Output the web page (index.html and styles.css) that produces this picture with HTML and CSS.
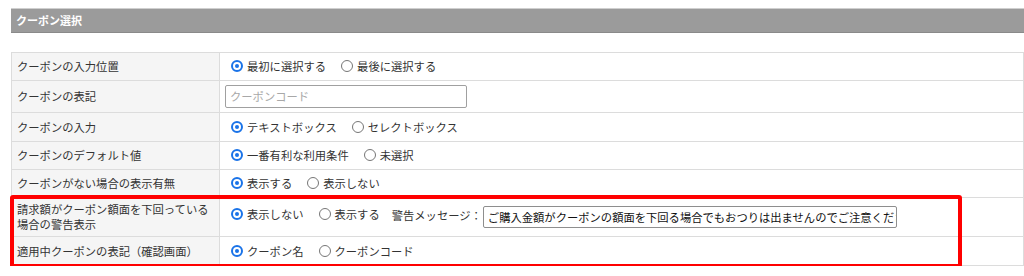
FILE: index.html
```html
<!DOCTYPE html>
<html lang="ja">
<head>
<meta charset="utf-8">
<link rel="stylesheet" href="styles.css">
</head>
<body>
<div class="section-title">クーポン選択</div>
<div class="table-wrap">
<table class="settings">
<colgroup><col class="col-label"><col class="col-value"></colgroup>
<tr class="r1">
<th>クーポンの入力位置</th>
<td><span class="opt"><span class="radio on"></span>最初に選択する</span><span class="opt"><span class="radio"></span>最後に選択する</span></td>
</tr>
<tr class="r2">
<th>クーポンの表記</th>
<td><span class="text-input placeholder">クーポンコード</span></td>
</tr>
<tr class="r3">
<th>クーポンの入力</th>
<td><span class="opt"><span class="radio on"></span>テキストボックス</span><span class="opt"><span class="radio"></span>セレクトボックス</span></td>
</tr>
<tr class="r4">
<th>クーポンのデフォルト値</th>
<td><span class="opt"><span class="radio on"></span>一番有利な利用条件</span><span class="opt"><span class="radio"></span>未選択</span></td>
</tr>
<tr class="r5">
<th>クーポンがない場合の表示有無</th>
<td><span class="opt"><span class="radio on"></span>表示する</span><span class="opt"><span class="radio"></span>表示しない</span></td>
</tr>
<tr class="r6">
<th>請求額がクーポン額面を下回っている<br>場合の警告表示</th>
<td><span class="opt"><span class="radio on"></span>表示しない</span><span class="opt"><span class="radio"></span>表示する</span><span class="msg-label">警告メッセージ：</span><span class="text-input msg">ご購入金額がクーポンの額面を下回る場合でもおつりは出ませんのでご注意ください。</span></td>
</tr>
<tr class="r7">
<th>適用中クーポンの表記（確認画面）</th>
<td><span class="opt"><span class="radio on"></span>クーポン名</span><span class="opt"><span class="radio"></span>クーポンコード</span></td>
</tr>
</table>
<div class="highlight"></div>
</div>
</body>
</html>
```

FILE: styles.css
```css
html, body {
  margin: 0;
  padding: 0;
  background: #fff;
}
body {
  font-family: "Noto Sans CJK JP", "Noto Sans", sans-serif;
  font-size: 11.3px;
  color: #333;
}
.section-title {
  margin: 8px 0 0 11px;
  box-sizing: border-box;
  height: 25px;
  line-height: 23px;
  background: #9b9b9b;
  border-top: 1px solid #cfcfcf;
  border-bottom: 1px solid #8a8a8a;
  color: #fff;
  font-weight: bold;
  font-size: 11px;
  padding-left: 5px;
}
.table-wrap {
  position: relative;
  margin: 19px 0 0 11px;
}
.settings {
  width: 100%;
  border-collapse: collapse;
  table-layout: fixed;
}
.col-label { width: 208px; }
.settings th, .settings td {
  border: 1px solid #dcdcdc;
  padding: 0 5px;
  text-align: left;
  font-weight: normal;
  vertical-align: middle;
  white-space: nowrap;
  overflow: hidden;
}
.settings th {
  background: #f5f5f5;
  line-height: 15px;
}
.settings td { background: #fff; }
.r1 { height: 28px; }
.r2 { height: 32px; }
.r3 { height: 29px; }
.r4 { height: 28px; }
.r5 { height: 28px; }
.r6 { height: 39px; }
.r7 { height: 29px; }
.opt {
  display: inline-flex;
  align-items: center;
  margin-right: 9px;
}
.radio {
  width: 12px;
  height: 12px;
  box-sizing: border-box;
  border: 1px solid #767676;
  border-radius: 50%;
  margin: 0 4px 0 6px;
  position: relative;
  background: #fff;
}
.radio.on {
  border: 2px solid #1a73e8;
}
.radio.on::after {
  content: "";
  position: absolute;
  left: 2px;
  top: 2px;
  width: 4px;
  height: 4px;
  border-radius: 50%;
  background: #1a73e8;
}
.text-input {
  display: inline-block;
  box-sizing: border-box;
  border: 1px solid #a0a0a0;
  border-radius: 2px;
  vertical-align: middle;
  padding: 0 4px;
  overflow: hidden;
  white-space: nowrap;
}
.placeholder {
  width: 242px;
  height: 23px;
  line-height: 21px;
  color: #a8a8a8;
}
.msg-label {
  margin-left: 3px;
  margin-right: 1px;
}
.msg {
  width: 414px;
  height: 22px;
  line-height: 20px;
  font-size: 11.3px;
  color: #111;
  border-color: #8e8e8e;
}
.highlight {
  position: absolute;
  left: -1px;
  top: 143px;
  width: 952px;
  height: 73px;
  box-sizing: border-box;
  border: 4px solid #ff0000;
  border-radius: 3px;
  pointer-events: none;
}
```
